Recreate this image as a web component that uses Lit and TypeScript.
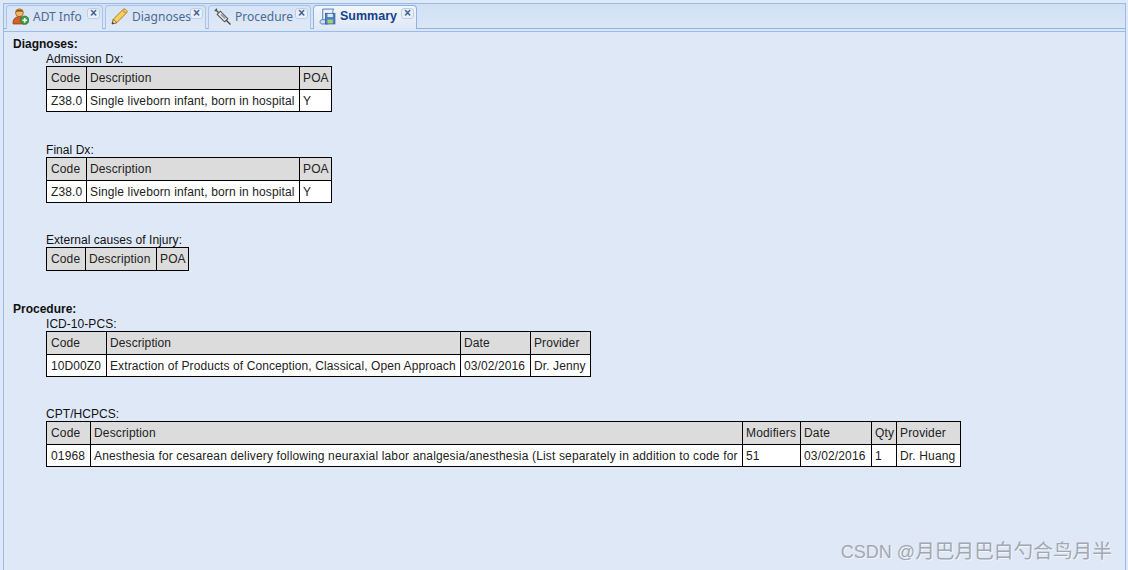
import { LitElement, html, css, svg } from "lit";
import { customElement } from "lit/decorators.js";

type Tbl = { label: string; widths: number[]; head: string[]; rows: string[][]; mt: number; ls: number };

const icons: Record<string, unknown> = {
  adt: svg`<svg class="ic" viewBox="0 0 16 16" width="17" height="17">
    <circle cx="7" cy="4.500" r="3.700" fill="#edb868" stroke="#a8651c" stroke-width=".8"/>
    <path d="M3.300 4.200C4 .8 10 .8 10.700 4.200 9 3 5 3 3.300 4.200z" fill="#8a4a16"/>
    <path d="M1 15c-.4-4.500 2-6.800 6-6.800 2 0 3.400.6 4.300 1.600V15z" fill="#d2622a" stroke="#96401a" stroke-width=".8"/>
    <circle cx="12" cy="11.500" r="3.900" fill="#3fa34a" stroke="#1f6e2b" stroke-width=".7"/>
    <path d="M9.900 11.500h4.200M12 9.400v4.200" stroke="#fff" stroke-width="1.500"/></svg>`,
  pencil: svg`<svg class="ic" viewBox="0 0 16 16" width="17" height="17">
    <path d="M1 15l1.200-4.500L11.500 1.300c.8-.6 1.700-.5 2.300.1l.9.9c.6.700.6 1.500 0 2.200L5.500 13.800z" fill="#f6cf5c" stroke="#a9781e" stroke-width=".9"/>
    <path d="M2.200 10.500l3.300 3.300L1 15z" fill="#f2dcb4" stroke="#7a5a2a" stroke-width=".7"/>
    <path d="M1 15l.5-2 1.500 1.500z" fill="#333"/>
    <path d="M10.800 2l3.300 3.300" stroke="#d8a030" stroke-width="1.400"/></svg>`,
  syringe: svg`<svg class="ic" viewBox="0 0 16 16" width="17" height="17">
    <path d="M.8 2.800L2.800.8M1.800 1.800l2.400 2.400" stroke="#555" stroke-width="1.300" fill="none"/>
    <path d="M3 6l3-3 7 7-3 3z" fill="#e8eaee" stroke="#555" stroke-width="1"/>
    <path d="M6 6.500l1.500-1.500 4 4-1.500 1.500z" fill="#9aa2ae"/>
    <path d="M11.500 11.500l4 4" stroke="#444" stroke-width="1.300"/></svg>`,
  summary: svg`<svg class="ic" viewBox="0 0 16 16" width="17" height="17">
    <path d="M3.500 1h10.500c-1 1-1 2-1 3v8H3.500z" fill="#eaf1fb" stroke="#4f79b5" stroke-width=".9"/>
    <path d="M1 13c0-1.500 1-2 2.500-2H9v4H2.500C1.500 15 1 14 1 13z" fill="#cfe0f5" stroke="#4f79b5" stroke-width=".9"/>
    <rect x="6" y="5" width="9" height="10" fill="#4f82c4" stroke="#2f5a98" stroke-width=".7"/>
    <rect x="8" y="5.500" width="5" height="3" fill="#dfeaf8"/>
    <rect x="8" y="11" width="5" height="3.500" fill="#a8d070"/></svg>`,
};

const diag = [["Z38.0", "Single liveborn infant, born in hospital", "Y"]];

const groups: { title: string; mt: number; tables: Tbl[] }[] = [
  {
    title: "Diagnoses:",
    mt: 0,
    tables: [
      { label: "Admission Dx:", widths: [40, 213, 32], head: ["Code", "Description", "POA"], rows: diag, mt: 0, ls: 0.13 },
      { label: "Final Dx:", widths: [40, 213, 32], head: ["Code", "Description", "POA"], rows: diag, mt: 31, ls: 0.13 },
      { label: "External causes of Injury:", widths: [39, 71, 32], head: ["Code", "Description", "POA"], rows: [], mt: 30, ls: 0.13 },
    ],
  },
  {
    title: "Procedure:",
    mt: 31,
    tables: [
      {
        label: "ICD-10-PCS:",
        widths: [60, 354, 70, 60],
        head: ["Code", "Description", "Date", "Provider"],
        rows: [["10D00Z0", "Extraction of Products of Conception, Classical, Open Approach", "03/02/2016", "Dr. Jenny"]],
        mt: 0,
        ls: 0.1,
      },
      {
        label: "CPT/HCPCS:",
        widths: [44, 652, 58, 71, 25, 64],
        head: ["Code", "Description", "Modifiers", "Date", "Qty", "Provider"],
        rows: [[
          "01968",
          "Anesthesia for cesarean delivery following neuraxial labor analgesia/anesthesia (List separately in addition to code for",
          "51",
          "03/02/2016",
          "1",
          "Dr. Huang",
        ]],
        mt: 30,
        ls: 0.155,
      },
    ],
  },
];

const tabs = [
  { name: "ADT Info", icon: "adt", w: 97 },
  { name: "Diagnoses", icon: "pencil", w: 101 },
  { name: "Procedure", icon: "syringe", w: 103 },
  { name: "Summary", icon: "summary", w: 104, active: true },
];

@customElement("app-root")
export class AppRoot extends LitElement {
  static styles = css`
    :host {
      display: block;
      width: 1128px;
      height: 570px;
      overflow: hidden;
      position: relative;
      background: #dfe8f6;
      font-family: "Liberation Sans", Arial, sans-serif;
      font-size: 12px;
      color: #111;
    }
    .frame {
      margin: 3px 2px 0 3px;
      height: 567px;
      box-sizing: border-box;
      border: 1px solid #99bbe8;
      border-bottom: none;
    }
    .strip {
      height: 25px;
      box-sizing: border-box;
      padding: 1px 0 0 2px;
      display: flex;
      gap: 2px;
      background: linear-gradient(#d0e0f5, #dbe6f6);
      border-bottom: 1px solid #8db2e3;
    }
    .tab {
      height: 24px;
      box-sizing: border-box;
      border: 1px solid #a9c4e8;
      border-bottom: none;
      border-radius: 4px 4px 0 0;
      background: linear-gradient(#d6e4f6, #dfe8f6);
      display: flex;
      align-items: center;
      padding: 0 0 3px 5px;
      position: relative;
      color: #4a6a94;
      font-family: "Noto Sans", "Liberation Sans", sans-serif;
      font-size: 12px;
    }
    .tab.active {
      background: linear-gradient(#f1f6fd, #dfe8f6);
      color: #15428b;
      font-family: "Liberation Sans", sans-serif;
      font-weight: bold;
      font-size: 12.5px;
      border-color: #8db2e3;
    }
    .ic { flex: none; margin-right: 4px; }
    .close {
      position: absolute;
      top: 2px;
      right: 2px;
      width: 13px;
      height: 11px;
      box-sizing: border-box;
      border: 1px solid #bccfe9;
      border-radius: 3px;
      background: #e9f0fa;
      color: #3f5f8f;
      font: bold 12px/9px "Liberation Sans", sans-serif;
      text-align: center;
    }
    .rule {
      height: 3px;
      box-sizing: border-box;
      background: #dbe6f6;
      border-bottom: 1px solid #99bbe8;
    }
    .panel {
      padding: 5px 0 0 9px;
    }
    .title { font-weight: bold; line-height: 15px; height: 15px; }
    .sub { padding-left: 33px; }
    .label { line-height: 15px; height: 14px; letter-spacing: 0.05px; }
    table {
      border-collapse: collapse;
      table-layout: fixed;
      font-size: 12px;
    }
    th, td {
      border: 1px solid #000;
      padding: 0 2px 0 3px;
      text-align: left;
      font-weight: normal;
      white-space: nowrap;
      overflow: hidden;
      box-sizing: border-box;
      color: #222;
    }
    th:first-child, td:first-child { padding-left: 4px; }
    th { background: #dcdcdc; height: 23px; }
    td { background: #fff; height: 22px; }
    .wm {
      position: absolute;
      right: 16px;
      top: 540px;
      font-family: "Liberation Sans", "Noto Sans CJK SC", sans-serif;
      font-size: 18px;
      line-height: 22px;
      color: #a2a8b2;
      text-shadow: 1px 1px 0 #f2f5fa;
      white-space: nowrap;
    }
    .wm span { font-size: 19.7px; }
  `;

  render() {
    return html`
      <div class="frame">
        <div class="strip">
          ${tabs.map(
            (t) => html`<div class="tab ${t.active ? "active" : ""}" style="width:${t.w}px">
              ${icons[t.icon]}<span>${t.name}</span><span class="close">×</span>
            </div>`
          )}
        </div>
        <div class="rule"></div>
        <div class="panel">
          ${groups.map(
            (g) => html`<div style="margin-top:${g.mt}px">
              <div class="title">${g.title}</div>
              <div class="sub">
                ${g.tables.map(
                  (t) => html`<div style="margin-top:${t.mt}px">
                    <div class="label">${t.label}</div>
                    <table style="width:${t.widths.reduce((a, b) => a + b, 0)}px;letter-spacing:${t.ls}px">
                      <colgroup>${t.widths.map((w) => html`<col style="width:${w}px" />`)}</colgroup>
                      <tr>${t.head.map((h) => html`<th>${h}</th>`)}</tr>
                      ${t.rows.map((r) => html`<tr>${r.map((c) => html`<td>${c}</td>`)}</tr>`)}
                    </table>
                  </div>`
                )}
              </div>
            </div>`
          )}
        </div>
      </div>
      <div class="wm">CSDN @<span>月巴月巴白勺合鸟月半</span></div>
    `;
  }
}
